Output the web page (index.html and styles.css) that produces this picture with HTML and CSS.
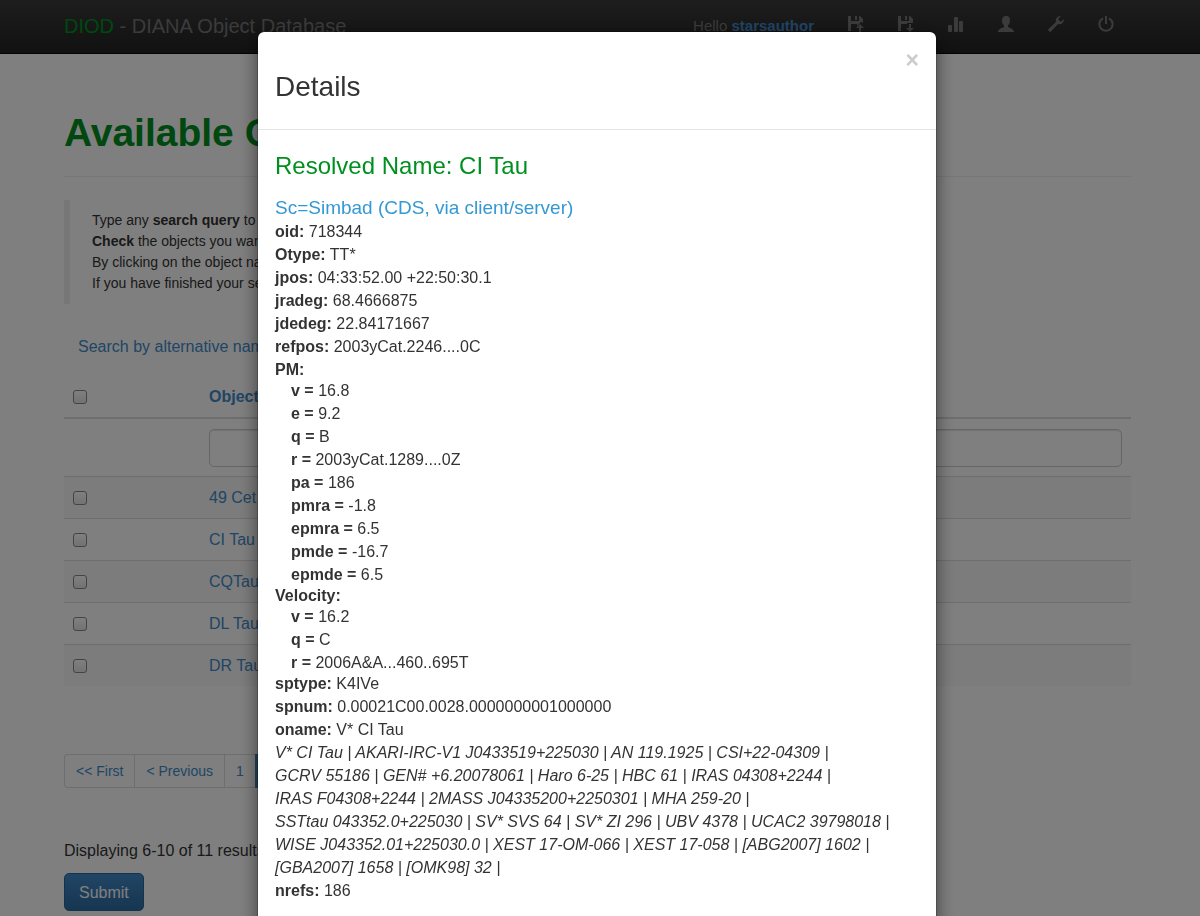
FILE: index.html
```html
<!DOCTYPE html>
<html lang="en">
  <head>
    <meta charset="UTF-8" />
    <meta name="viewport" content="width=device-width, initial-scale=1.0" />
    <title>DIOD - DIANA Object Database</title>
    <link rel="stylesheet" href="styles.css">
  </head>
  <body class="modal-open">
    <header class="navbar">
      <div class="container navbar-inner">
        <a class="brand" href="#"><span class="brand-short">DIOD</span> - DIANA Object Database</a>
        <nav class="nav">
          <p class="hello">Hello <a href="#">starsauthor</a></p>
          <ul class="nav-icons">
            <li>
              <a href="#" aria-label="Upload">
                <svg class="icon" viewBox="0 0 16 16"><path d="M0 0h3v5h8V0h1l3 3v4l-2-1-4 4v-2H3v7H0zM7 0h2v4H7zM12 8l4 4h-3v4h-2v-4H8z" /></svg>
              </a>
            </li>
            <li>
              <a href="#" aria-label="Save">
                <svg class="icon" viewBox="0 0 16 16"><path d="M0 0h3v5h8V0h1l3 3v4H9v1H3v7H0zM7 0h2v4H7zM11 8h2v4h3l-4 4-4-4h3z" /></svg>
              </a>
            </li>
            <li>
              <a href="#" aria-label="Statistics">
                <svg class="icon" viewBox="0 0 16 16"><rect x="0" y="9" width="4" height="7" rx="1" /><rect x="6" y="1" width="4" height="15" rx="1" /><rect x="11" y="5" width="4" height="11" rx="1" /></svg>
              </a>
            </li>
            <li>
              <a href="#" aria-label="Profile">
                <svg class="icon" viewBox="0 0 16 16"><path d="M8 0c3 0 4 2 4 4.500C12 7 11 8 10 9.500v1.500c1 1 6 1.500 6 5H0c0-3.500 5-4 6-5V9.500C5 8 4 7 4 4.500 4 2 5 0 8 0z" /></svg>
              </a>
            </li>
            <li>
              <a href="#" aria-label="Settings">
                <svg class="icon" viewBox="0 0 16 16"><path d="M13 0L10.500 2.500 11 5l2.500 0.500L16 3C16 7 13 9 10 8l-7 7.500c-1 1-3.500-1-2.500-2.500L8 6C7 3 9 0 13 0z" /></svg>
              </a>
            </li>
            <li>
              <a href="#" aria-label="Logout">
                <svg class="icon icon-line" viewBox="0 0 16 16"><path d="M8 0v8M5 2.300a6.600 6.600 0 1 0 6 0" /></svg>
              </a>
            </li>
          </ul>
        </nav>
      </div>
    </header>

    <main class="container">
      <h1 class="page-header">Available Objects</h1>

      <blockquote class="help">
        Type any <b>search query</b> to filter the objects.<br>
        <b>Check</b> the objects you want to select.<br>
        By clicking on the object name you get the details.<br>
        If you have finished your selection, press Submit.
      </blockquote>

      <a class="alt-search" href="#">Search by alternative name</a>

      <form>
        <table class="objects">
          <thead>
            <tr>
              <th class="check-col"><input type="checkbox" aria-label="Select all"></th>
              <th><a href="#">Object Name</a></th>
            </tr>
          </thead>
          <tbody>
            <tr class="filter">
              <td></td>
              <td><input class="form-control" type="text" aria-label="Filter by object name"></td>
            </tr>
            <tr>
              <td><input type="checkbox" aria-label="49 Cet"></td>
              <td><a href="#">49 Cet</a></td>
            </tr>
            <tr>
              <td><input type="checkbox" aria-label="CI Tau"></td>
              <td><a href="#">CI Tau</a></td>
            </tr>
            <tr>
              <td><input type="checkbox" aria-label="CQTau"></td>
              <td><a href="#">CQTau</a></td>
            </tr>
            <tr>
              <td><input type="checkbox" aria-label="DL Tau"></td>
              <td><a href="#">DL Tau</a></td>
            </tr>
            <tr>
              <td><input type="checkbox" aria-label="DR Tau"></td>
              <td><a href="#">DR Tau</a></td>
            </tr>
          </tbody>
        </table>

        <ul class="pagination">
          <li><a href="#">&lt;&lt; First</a></li>
          <li><a href="#">&lt; Previous</a></li>
          <li><a href="#">1</a></li>
          <li class="active"><a href="#">2</a></li>
          <li><a href="#">3</a></li>
        </ul>

        <p class="summary">Displaying 6-10 of 11 results.</p>
        <button class="btn" type="submit">Submit</button>
      </form>
    </main>

    <div class="modal-backdrop"></div>

    <div class="modal" role="dialog" aria-modal="true" aria-labelledby="details-title">
      <div class="modal-content">
        <div class="modal-header">
          <h3 id="details-title">Details</h3>
          <button class="close" type="button" aria-label="Close">&times;</button>
        </div>
        <div class="modal-body">
          <h3 class="resolved">Resolved Name: CI Tau</h3>
          <h4 class="source">Sc=Simbad (CDS, via client/server)</h4>
          <ul class="details">
            <li><b>oid:</b> 718344</li>
            <li><b>Otype:</b> TT*</li>
            <li><b>jpos:</b> 04:33:52.00 +22:50:30.1</li>
            <li><b>jradeg:</b> 68.4666875</li>
            <li><b>jdedeg:</b> 22.84171667</li>
            <li><b>refpos:</b> 2003yCat.2246....0C</li>
            <li>
              <b>PM:</b>
              <ul class="sub-details">
                <li><b>v =</b> 16.8</li>
                <li><b>e =</b> 9.2</li>
                <li><b>q =</b> B</li>
                <li><b>r =</b> 2003yCat.1289....0Z</li>
                <li><b>pa =</b> 186</li>
                <li><b>pmra =</b> -1.8</li>
                <li><b>epmra =</b> 6.5</li>
                <li><b>pmde =</b> -16.7</li>
                <li><b>epmde =</b> 6.5</li>
              </ul>
            </li>
            <li>
              <b>Velocity:</b>
              <ul class="sub-details">
                <li><b>v =</b> 16.2</li>
                <li><b>q =</b> C</li>
                <li><b>r =</b> 2006A&amp;A...460..695T</li>
              </ul>
            </li>
            <li><b>sptype:</b> K4IVe</li>
            <li><b>spnum:</b> 0.00021C00.0028.0000000001000000</li>
            <li><b>oname:</b> V* CI Tau</li>
            <li class="aliases">
              V* CI Tau | AKARI-IRC-V1 J0433519+225030 | AN 119.1925 | CSI+22-04309 |<br>
              GCRV 55186 | GEN# +6.20078061 | Haro 6-25 | HBC 61 | IRAS 04308+2244 |<br>
              IRAS F04308+2244 | 2MASS J04335200+2250301 | MHA 259-20 |<br>
              SSTtau 043352.0+225030 | SV* SVS 64 | SV* ZI 296 | UBV 4378 | UCAC2 39798018 |<br>
              WISE J043352.01+225030.0 | XEST 17-OM-066 | XEST 17-058 | [ABG2007] 1602 |<br>
              [GBA2007] 1658 | [OMK98] 32 |
            </li>
            <li><b>nrefs:</b> 186</li>
          </ul>
        </div>
      </div>
    </div>
  </body>
</html>
```
FILE: styles.css
```css
* {
  box-sizing: border-box;
}

body {
  font-family: "Liberation Sans", Arial, sans-serif;
  font-size: 16px;
  line-height: 23px;
  color: #333;
  background-color: #fff;
  margin: 0;
  padding-right: 5px;
}

.modal-open {
  overflow: hidden;
}

a {
  color: #428bca;
  text-decoration: none;
}

ul {
  list-style: none;
  margin: 0;
  padding: 0;
}

.container {
  width: 90%;
  max-width: 1067px;
  margin: 0 auto;
}

/* Navbar */
.navbar {
  height: 54px;
  margin-right: -5px;
  padding-right: 5px;
  background-image: linear-gradient(#3c3c3c, #222);
  border-bottom: 1px solid #080808;
}

.navbar-inner {
  display: flex;
  justify-content: space-between;
  padding-top: 14px;
}

.brand {
  font-size: 20px;
  line-height: 25px;
  color: #777;
}

.brand-short {
  color: #009020;
}

.nav {
  display: flex;
}

.hello {
  margin: 0;
  font-size: 15px;
  color: #777;
}

.hello a {
  font-weight: bold;
}

.nav-icons {
  display: flex;
  gap: 34px;
  margin-left: 34px;
  margin-right: 17px;
}

.icon {
  display: block;
  width: 16px;
  height: 16px;
  margin-top: 2px;
  fill: #777;
}

.icon-line {
  fill: none;
  stroke: #777;
  stroke-width: 2;
}

/* Page */
.page-header {
  margin: 49px 0 23px;
  padding-bottom: 14px;
  font-size: 39px;
  line-height: 59px;
  color: #009020;
  border-bottom: 1px solid #eee;
}

.help {
  margin: 0 0 31px;
  padding: 10px 22px;
  font-size: 14px;
  line-height: 21px;
  border-left: 6px solid #eee;
}

.alt-search {
  display: inline-block;
  padding: 0 14px;
}

.objects {
  width: 100%;
  margin: 18px 0 68px;
  border-spacing: 0;
}

.objects th,
.objects td {
  padding: 9px;
  text-align: left;
  border-top: 1px solid #ddd;
}

.objects th {
  border-top: 0;
  border-bottom: 2px solid #ddd;
}

.objects .filter td {
  border-top-color: transparent;
}

.objects tbody tr:nth-child(even) {
  background-color: #f9f9f9;
}

.check-col {
  width: 136px;
}

input[type="checkbox"] {
  appearance: none;
  display: block;
  width: 14px;
  height: 14px;
  margin: 0;
  border: 1px solid #888;
  border-radius: 3px;
  background-image: linear-gradient(#fff, #e5e5e5);
}

.form-control {
  display: block;
  width: 100%;
  height: 38px;
  padding: 7px 14px;
  font: inherit;
  background-color: #fff;
  border: 1px solid #ccc;
  border-radius: 5px;
  box-shadow: inset 0 1px 1px rgba(0, 0, 0, 0.1);
}

.pagination {
  display: flex;
  font-size: 14px;
  line-height: 20px;
}

.pagination a {
  display: block;
  padding: 6px 11px;
  border: 1px solid #ddd;
  border-right: 0;
}

.pagination li:first-child a {
  border-radius: 4px 0 0 4px;
}

.pagination li:last-child a {
  border-right: 1px solid #ddd;
  border-radius: 0 4px 4px 0;
}

.pagination .active a {
  color: #fff;
  background-color: #428bca;
  border-color: #428bca;
}

.summary {
  margin: 51px 0 11px;
}

.btn {
  height: 38px;
  padding: 0 14px;
  font: inherit;
  color: #fff;
  background-image: linear-gradient(#428bca, #2d6ca2);
  border: 1px solid #2b669a;
  border-radius: 5px;
}

/* Modal */
.modal-backdrop {
  position: fixed;
  inset: 0;
  background-color: #000;
  opacity: 0.5;
}

.modal {
  position: fixed;
  inset: 0;
  padding: 31px 6px 31px 0;
  overflow: hidden;
}

.modal-content {
  max-width: 680px;
  margin: 0 auto;
  background-color: #fff;
  background-clip: padding-box;
  border: 1px solid rgba(0, 0, 0, 0.2);
  border-radius: 7px;
  box-shadow: 0 6px 17px rgba(0, 0, 0, 0.5);
}

.modal-header {
  display: flex;
  justify-content: space-between;
  align-items: flex-start;
  padding: 17px;
  border-bottom: 1px solid #e5e5e5;
}

.modal-header h3 {
  margin: 23px 0 10px;
  font-size: 28px;
  font-weight: normal;
  line-height: 30px;
}

.close {
  padding: 0;
  font-family: inherit;
  font-size: 23px;
  font-weight: bold;
  line-height: 23px;
  color: #ccc;
  background: none;
  border: none;
}

.modal-body {
  padding: 17px;
}

.resolved {
  margin: 5px 0 16px;
  font-size: 24px;
  font-weight: normal;
  line-height: 28px;
  color: #009020;
}

.source {
  margin: 0 0 1px;
  font-size: 19px;
  font-weight: normal;
  line-height: 23px;
  color: #3399d5;
}

.details {
  padding-bottom: 23px;
}

/* pull nested rows in towards their heading */
.sub-details {
  margin: -2px 0;
  padding-left: 16px;
}

.aliases {
  font-style: italic;
}
```
